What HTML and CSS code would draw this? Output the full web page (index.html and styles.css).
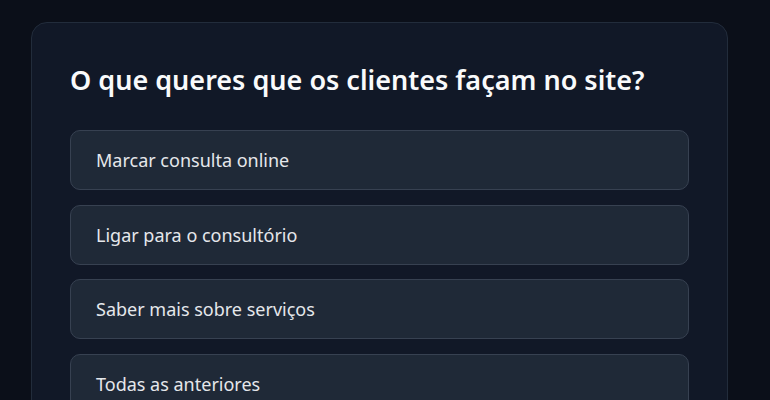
FILE: index.html
```html
<!DOCTYPE html>
<html lang="pt">
<head>
    <meta charset="UTF-8">
    <meta name="viewport" content="width=device-width, initial-scale=1.0">
    <title>Objetivo do site</title>
    <link rel="stylesheet" href="styles.css">
</head>
<body>
    <div class="card">
        <h2>O que queres que os clientes façam no site?</h2>

        <div class="options">
            <button class="option">Marcar consulta online</button>
            <button class="option">Ligar para o consultório</button>
            <button class="option">Saber mais sobre serviços</button>
            <button class="option">Todas as anteriores</button>
        </div>
    </div>
</body>
</html>
```

FILE: styles.css
```css
* {
    margin: 0;
    padding: 0;
    box-sizing: border-box;
    font-family: 'Noto Sans', 'Open Sans', sans-serif;
}

body {
    background: #0b0f19;
    padding: 22px 42px 0 31px;
    overflow: hidden;
}

.card {
    width: 697px;
    background: #111827;
    border: 1px solid #222c3b;
    border-radius: 16px;
    padding: 40px 38px;
}

h2 {
    color: #f9fafb;
    font-size: 27px;
    font-weight: 600;
    line-height: 34px;
    margin-bottom: 33px;
}

.options {
    display: flex;
    flex-direction: column;
    gap: 14.5px;
}

.option {
    height: 60px;
    text-align: left;
    background: #1f2937;
    border: 1px solid #374151;
    border-radius: 10px;
    padding: 0 25px;
    color: #e5e7eb;
    font-size: 18px;
    cursor: pointer;
}
```
